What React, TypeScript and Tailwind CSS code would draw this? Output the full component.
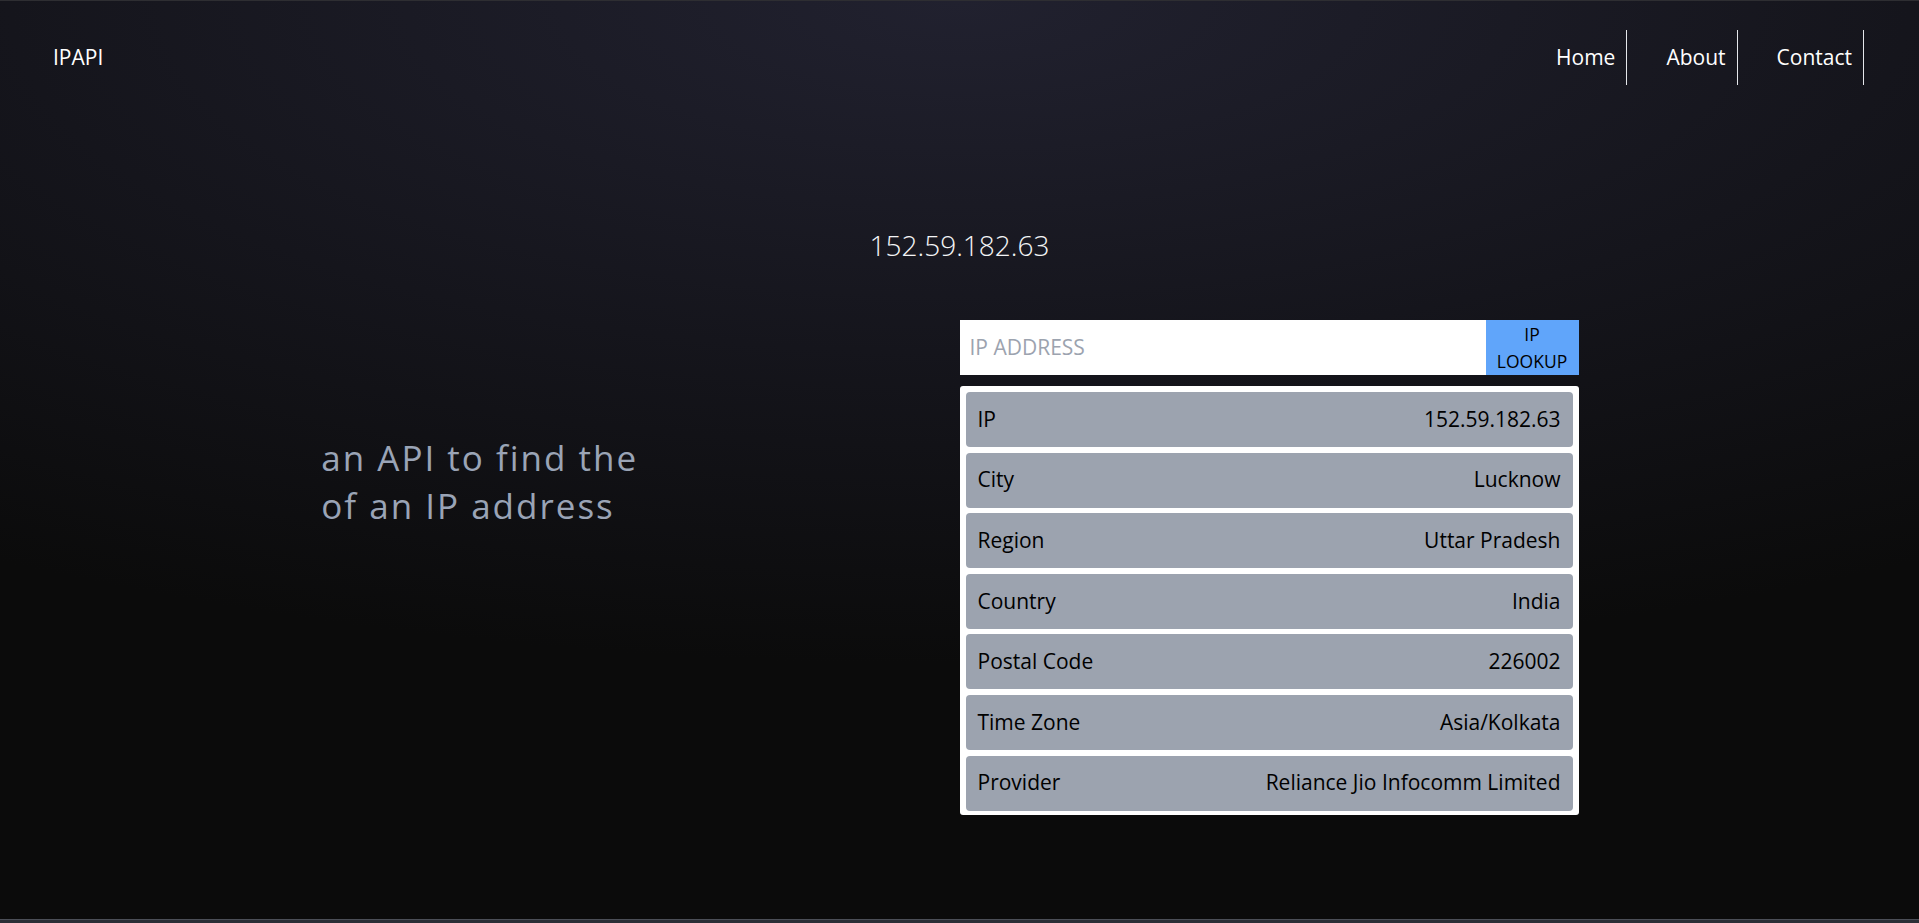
import React from 'react';

const details: [string, string][] = [
  ['IP', '152.59.182.63'],
  ['City', 'Lucknow'],
  ['Region', 'Uttar Pradesh'],
  ['Country', 'India'],
  ['Postal Code', '226002'],
  ['Time Zone', 'Asia/Kolkata'],
  ['Provider', 'Reliance Jio Infocomm Limited'],
];

const links = ['Home', 'About', 'Contact'];

export default function App() {
  return (
    <div className="flex h-screen flex-col overflow-hidden bg-[#0a0a0a] font-['Open_Sans',sans-serif]">
      <main className="flex flex-1 flex-col border-t border-[#2e2e32] bg-[radial-gradient(ellipse_110%_85%_at_50%_0%,#21212f_0%,#15151c_45%,#0b0b0b_85%)]">
        {/* Header */}
        <header className="flex items-center justify-between pt-[29px] pb-[28px] pl-[53px] pr-[55px]">
          <a href="#" className="text-[21px] text-white">
            IPAPI
          </a>
          <nav className="flex gap-[28px]">
            {links.map((link) => (
              <a
                key={link}
                href="#"
                className="flex h-[55px] items-center border-r border-[#e5e7eb] px-[11px] text-[21px] text-white"
              >
                {link}
              </a>
            ))}
          </nav>
        </header>

        {/* Current IP */}
        <h1 className="mt-[112px] text-center text-[28px] leading-[40px] font-light text-[#f3f4f6]">
          152.59.182.63
        </h1>

        <section className="mt-[55px] grid grid-cols-2">
          <div className="flex justify-center pt-[114px]">
            <p className="text-[35px] leading-[48px] tracking-[2px] text-[#9aa4b6]">
              an API to find the
              <br />
              of an IP address
            </p>
          </div>

          <div className="w-[619px]">
            <form className="flex h-[55px]" onSubmit={(e) => e.preventDefault()}>
              <input
                type="text"
                placeholder="IP ADDRESS"
                className="min-w-0 flex-1 bg-white px-[10px] text-[21px] text-black outline-none placeholder:text-[#9ca3af]"
              />
              <button
                type="submit"
                className="w-[93px] bg-[#60a5fa] px-[10px] text-[17.5px] leading-[27px] text-black"
              >
                IP LOOKUP
              </button>
            </form>

            <ul className="mt-[11px] flex flex-col gap-[5.6px] rounded-[3px] bg-white px-[6px] pt-[6px] pb-[4px]">
              {details.map(([label, value]) => (
                <li
                  key={label}
                  className="flex h-[55px] items-center justify-between rounded-[4px] bg-[#9ca3af] px-3 text-[21px] text-black"
                >
                  <span>{label}</span>
                  <span>{value}</span>
                </li>
              ))}
            </ul>
          </div>
        </section>
      </main>
      <div className="h-[4px] border-t border-[#4b4e57] bg-[#2b2e36]" />
    </div>
  );
}
